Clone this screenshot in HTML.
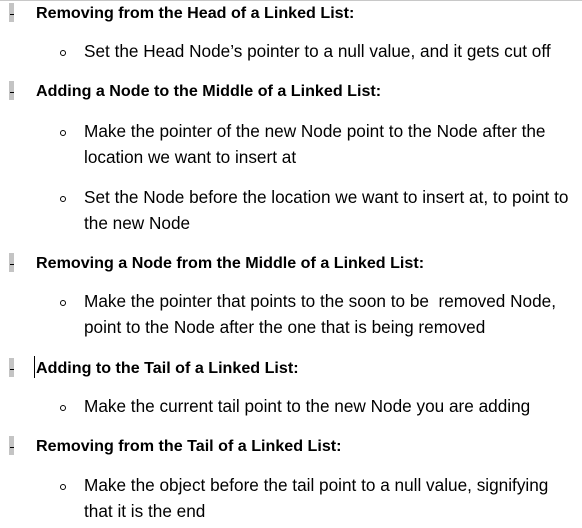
<!DOCTYPE html>
<html><head><style>
body{margin:0;width:582px;height:528px;background:#fff;position:relative;overflow:hidden;font-family:"Liberation Sans",sans-serif;color:#000}
.t{position:absolute;white-space:nowrap;line-height:20px}
.h{left:36px;font-weight:bold;font-size:16.1px}
.b{left:84px;font-size:17.2px}
.m{position:absolute;left:9px;width:5px;height:19px;background:#c4c4c4}
.m:after{content:"";position:absolute;left:1px;top:11px;width:4px;height:1px;background:#000}
.o{position:absolute;left:60px;width:4px;height:4px;border:1px solid #000;border-radius:50%}
</style></head><body>
<div style="position:absolute;left:0;top:0;width:582px;height:1px;background:#c8c8c8"></div>

<div class="m" style="top:3px"></div>
<div class="t h" style="top:3px">Removing from the Head of a Linked List:</div>
<div class="o" style="top:50px"></div>
<div class="t b" style="top:41px">Set the Head Node’s pointer to a null value, and it gets cut off</div>

<div class="m" style="top:81px"></div>
<div class="t h" style="top:81px">Adding a Node to the Middle of a Linked List:</div>
<div class="o" style="top:130px"></div>
<div class="t b" style="top:121px">Make the pointer of the new Node point to the Node after the</div>
<div class="t b" style="top:147px">location we want to insert at</div>
<div class="o" style="top:196px"></div>
<div class="t b" style="top:187px">Set the Node before the location we want to insert at, to point to</div>
<div class="t b" style="top:213px">the new Node</div>

<div class="m" style="top:253px"></div>
<div class="t h" style="top:253px">Removing a Node from the Middle of a Linked List:</div>
<div class="o" style="top:300px"></div>
<div class="t b" style="top:291px">Make the pointer that points to the soon to be &nbsp;removed Node,</div>
<div class="t b" style="top:317px">point to the Node after the one that is being removed</div>

<div class="m" style="top:358px"></div>
<div style="position:absolute;left:34px;top:356px;width:1px;height:22px;background:#000"></div>
<div class="t h" style="top:358px">Adding to the Tail of a Linked List:</div>
<div class="o" style="top:405px"></div>
<div class="t b" style="top:396px">Make the current tail point to the new Node you are adding</div>

<div class="m" style="top:436px"></div>
<div class="t h" style="top:436px">Removing from the Tail of a Linked List:</div>
<div class="o" style="top:484px"></div>
<div class="t b" style="top:475px">Make the object before the tail point to a null value, signifying</div>
<div class="t b" style="top:501px">that it is the end</div>
</body></html>
